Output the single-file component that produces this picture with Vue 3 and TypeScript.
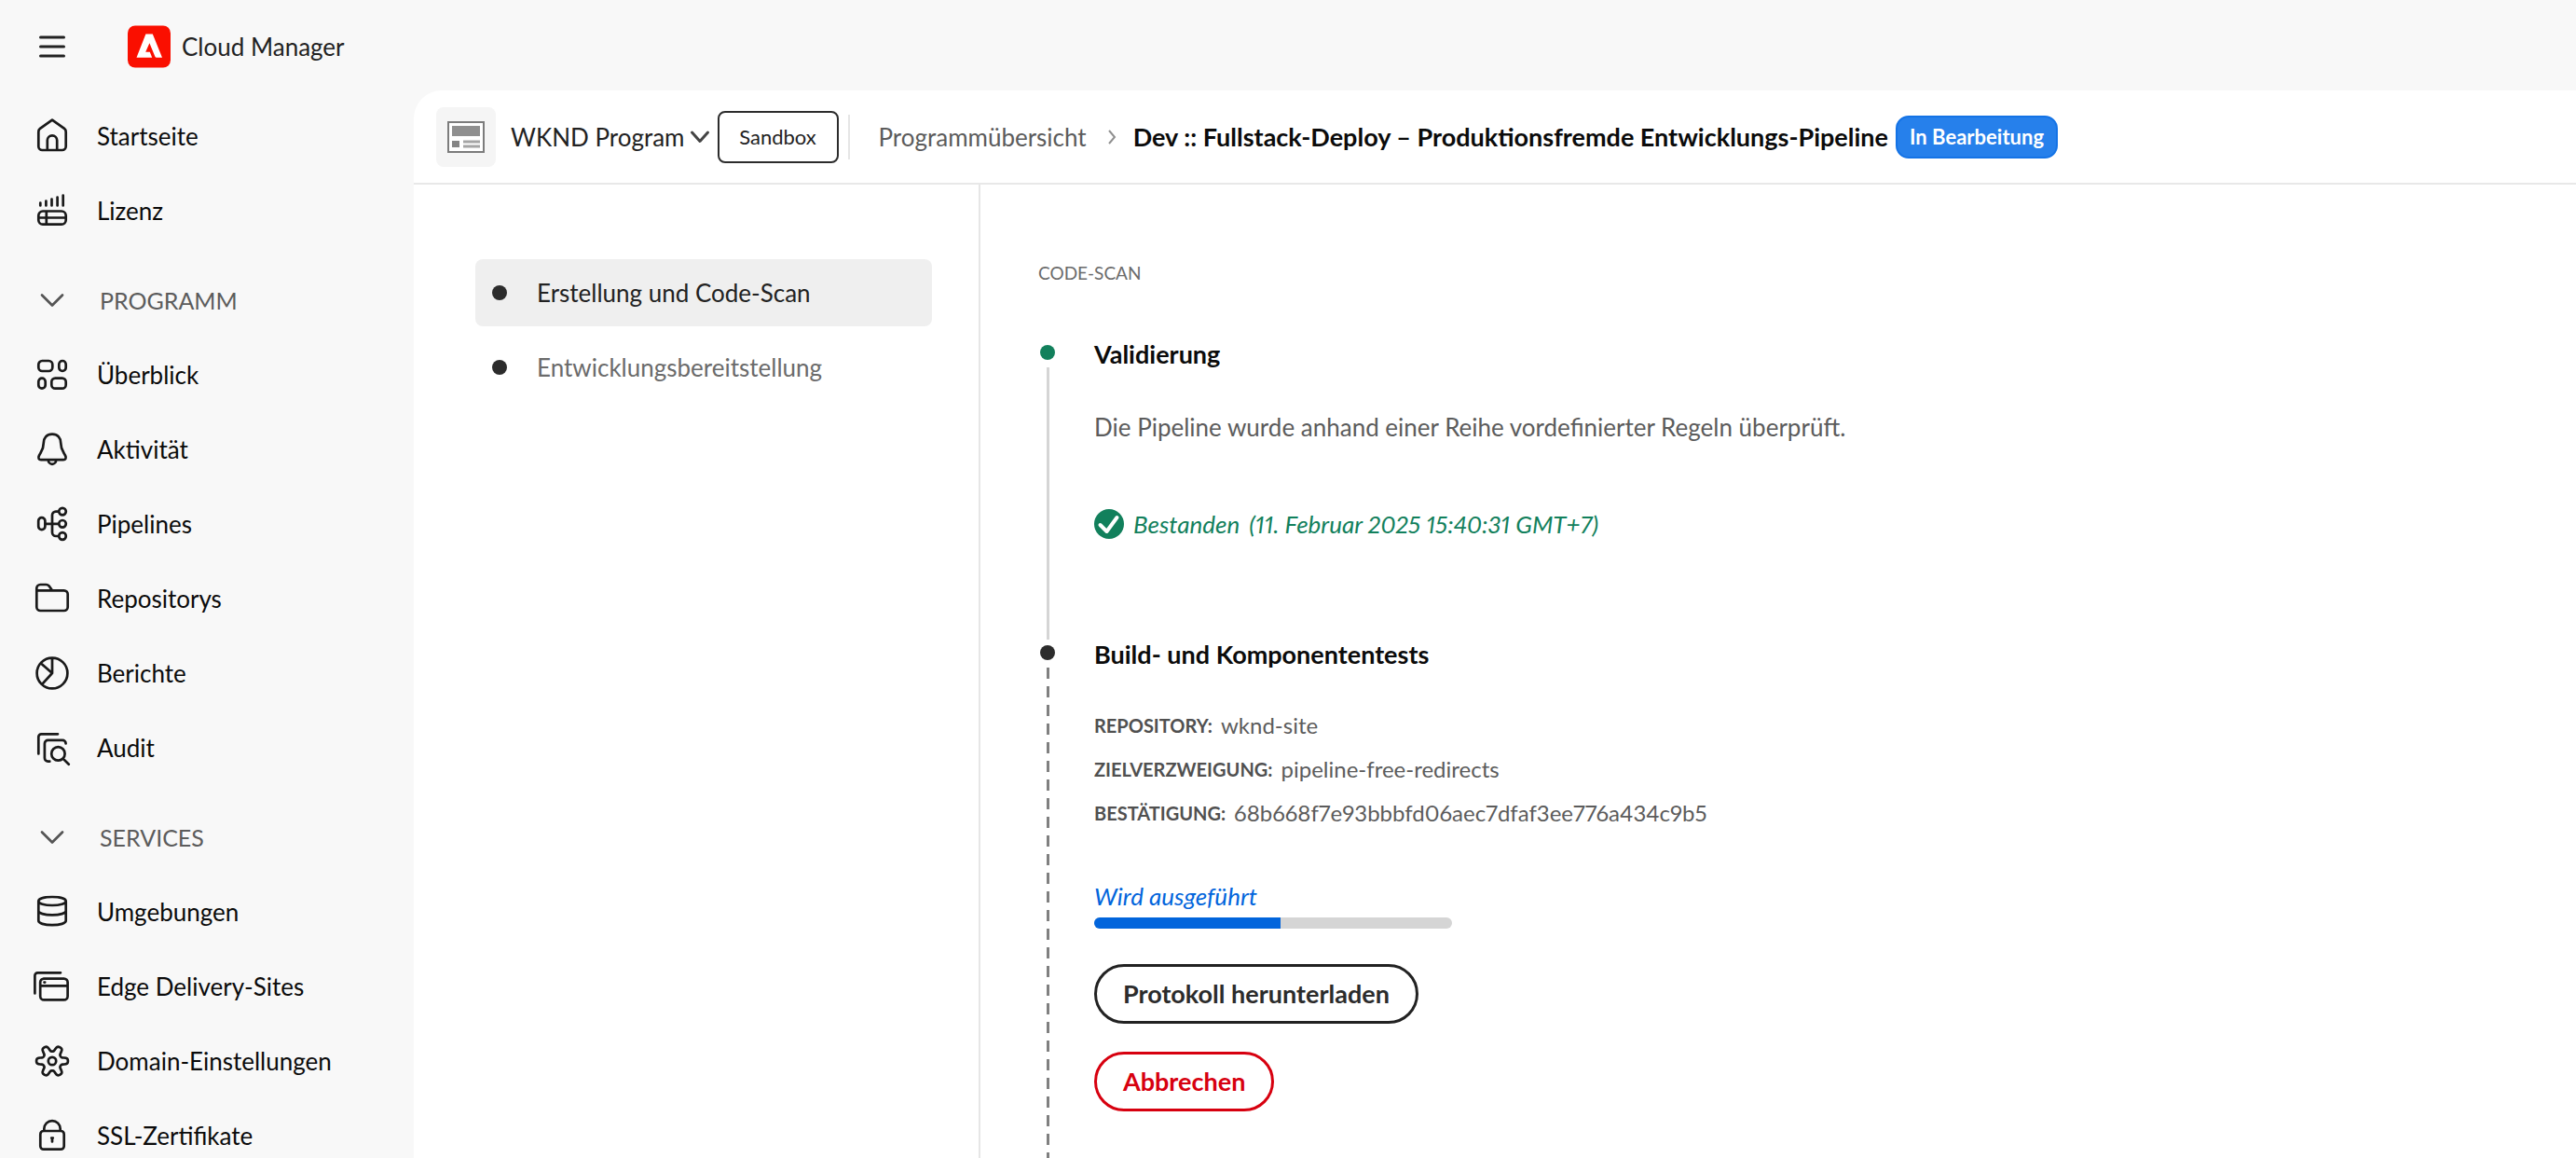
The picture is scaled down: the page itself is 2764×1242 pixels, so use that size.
<script setup lang="ts">
import { computed, ref } from 'vue'

type IconName =
  | 'home' | 'license' | 'overview' | 'bell' | 'pipelines' | 'folder' | 'reports'
  | 'audit' | 'database' | 'sites' | 'gear' | 'lock'

interface NavItem { label: string; icon: IconName }
interface NavSection { title: string; items: NavItem[] }

const topItems: NavItem[] = [
  { label: 'Startseite', icon: 'home' },
  { label: 'Lizenz', icon: 'license' },
]

const sections: NavSection[] = [
  {
    title: 'PROGRAMM',
    items: [
      { label: 'Überblick', icon: 'overview' },
      { label: 'Aktivität', icon: 'bell' },
      { label: 'Pipelines', icon: 'pipelines' },
      { label: 'Repositorys', icon: 'folder' },
      { label: 'Berichte', icon: 'reports' },
      { label: 'Audit', icon: 'audit' },
    ],
  },
  {
    title: 'SERVICES',
    items: [
      { label: 'Umgebungen', icon: 'database' },
      { label: 'Edge Delivery-Sites', icon: 'sites' },
      { label: 'Domain-Einstellungen', icon: 'gear' },
      { label: 'SSL-Zertifikate', icon: 'lock' },
    ],
  },
]

// Outline of the six-toothed gear, sampled in polar coordinates.
const gearPath = Array.from({ length: 120 }, (_, i) => {
  const a = (i / 120) * Math.PI * 2
  const r = 13.6 + (3.3 * Math.tanh(1.8 * Math.cos(6 * a))) / Math.tanh(1.8)
  return `${(20 + r * Math.cos(a)).toFixed(2)} ${(20 + r * Math.sin(a)).toFixed(2)}`
}).join(' L')

const icons: Record<IconName, string> = {
  home: 'M20 2.6 L33 11.8 Q34.7 13.2 34.7 15.4 V31 a4 4 0 0 1 -4 4 H9.3 a4 4 0 0 1 -4 -4 V15.4 Q5.3 13.2 7 11.8 Z M14.8 35 V24.6 a5 5 0 0 1 10.4 0 V35',
  license: 'M7.3 11.5 V14.5 M13.4 9.5 V14.5 M19.5 7.5 V14.5 M25.6 5.5 V14.5 M31.7 3.5 V14.5 M10 20.5 H30 a4.7 4.7 0 0 1 4.7 4.7 V30 a4.7 4.7 0 0 1 -4.7 4.7 H10 a4.7 4.7 0 0 1 -4.7 -4.7 V25.2 A4.7 4.7 0 0 1 10 20.5 Z M13.8 20.5 V34.7 M5.3 27.5 H34.7',
  overview: 'M9.3 5 H16.3 a4 4 0 0 1 4 4 V12 a4 4 0 0 1 -4 4 H9.3 a4 4 0 0 1 -4 -4 V9 a4 4 0 0 1 4 -4 Z M31 5 a3.7 3.7 0 0 1 3.7 3.7 V12.3 a3.7 3.7 0 0 1 -7.4 0 V8.7 A3.7 3.7 0 0 1 31 5 Z M9 23.6 a3.7 3.7 0 0 1 3.7 3.7 V31 a3.7 3.7 0 0 1 -7.4 0 V27.3 A3.7 3.7 0 0 1 9 23.6 Z M23.3 23.6 H30.7 a4 4 0 0 1 4 4 V30.7 a4 4 0 0 1 -4 4 H23.3 a4 4 0 0 1 -4 -4 V27.6 a4 4 0 0 1 4 -4 Z',
  bell: 'M20 3.6 C14 3.6 10.8 8 10.8 13 C10.8 20 8.5 22 6 26.5 C4.4 29.5 5.8 31.2 8 31.2 H32 C34.2 31.2 35.6 29.5 34 26.5 C31.5 22 29.2 20 29.2 13 C29.2 8 26 3.6 20 3.6 Z M15.8 31.2 a4.2 4.6 0 0 0 8.4 0',
  pipelines: 'M8.8 13.2 a3.6 3.6 0 0 1 3.6 3.6 V22.6 a3.6 3.6 0 0 1 -7.2 0 V16.8 A3.6 3.6 0 0 1 8.8 13.2 Z M12.4 19.8 H27.2 M27.2 6.6 H24 a4 4 0 0 0 -4 4 V29 a4 4 0 0 0 4 4 H27.2 M34.8 6.6 a3.8 3.8 0 1 1 -7.6 0 a3.8 3.8 0 1 1 7.6 0 Z M34.8 19.8 a3.8 3.8 0 1 1 -7.6 0 a3.8 3.8 0 1 1 7.6 0 Z M34.8 33 a3.8 3.8 0 1 1 -7.6 0 a3.8 3.8 0 1 1 7.6 0 Z',
  folder: 'M3.3 11.3 V9 a4 4 0 0 1 4 -4 H13.5 a4 4 0 0 1 3 1.3 L20 11.3 M3.3 11.3 H32.7 a4 4 0 0 1 4 4 V29 a4 4 0 0 1 -4 4 H7.3 a4 4 0 0 1 -4 -4 Z',
  reports: 'M36.4 20 a16.4 16.4 0 1 1 -32.8 0 a16.4 16.4 0 1 1 32.8 0 Z M20 3.6 V20 L8 9.5 M20 20 L9.4 31.6',
  audit: 'M5.3 26.5 V8.3 a3 3 0 0 1 3 -3 H26 M17.3 34.7 H15.5 a3.6 3.6 0 0 1 -3.6 -3.6 V15.5 a3.6 3.6 0 0 1 3.6 -3.6 H31 a3.6 3.6 0 0 1 3.6 3.6 M33.6 26.4 a7.2 7.2 0 1 1 -14.4 0 a7.2 7.2 0 1 1 14.4 0 Z M31.6 31.6 L37.8 37.8',
  database: 'M34.7 8.4 C34.7 11 28.5 13 20 13 S5.3 11 5.3 8.4 S11.5 4 20 4 S34.7 5.8 34.7 8.4 Z V29.6 C34.7 32.2 28.5 34.2 20 34.2 S5.3 32.2 5.3 29.6 V8.4 M5.3 19 C5.3 21.4 11.5 23.4 20 23.4 S34.7 21.4 34.7 19',
  sites: 'M1.4 27.5 V8.3 a3 3 0 0 1 3 -3 H29 M11 11.6 H32.6 a4 4 0 0 1 4 4 V30.4 a4 4 0 0 1 -4 4 H11.2 a4 4 0 0 1 -4 -4 V15.6 a4 4 0 0 1 4 -4 Z M7.2 19.4 H36.6 M11.5 15.6 H12.2',
  gear: `M${gearPath} Z M24.2 20 a4.2 4.2 0 1 1 -8.4 0 a4.2 4.2 0 1 1 8.4 0 Z`,
  lock: 'M10.8 15 H29.2 a3.5 3.5 0 0 1 3.5 3.5 V31.2 a3.5 3.5 0 0 1 -3.5 3.5 H10.8 a3.5 3.5 0 0 1 -3.5 -3.5 V18.5 a3.5 3.5 0 0 1 3.5 -3.5 Z M11.3 15 V12.8 a8.7 8.7 0 0 1 17.4 0 V15 M20 22.6 V26.4 M19.2 22.6 H20.8',
}

const stages = ['Erstellung und Code-Scan', 'Entwicklungsbereitstellung']
const activeStage = ref(0)

const details = [
  { label: 'REPOSITORY:', value: 'wknd-site' },
  { label: 'ZIELVERZWEIGUNG:', value: 'pipeline-free-redirects' },
  { label: 'BESTÄTIGUNG:', value: '68b668f7e93bbbfd06aec7dfaf3ee776a434c9b5' },
]

const progress = ref(52)
const progressStyle = computed(() => ({ width: `${progress.value}%` }))
</script>

<template>
  <div class="app">
    <header class="topbar">
      <button class="menu" type="button" aria-label="Menü">
        <svg width="40" height="40" viewBox="0 0 40 40"><path d="M7.5 10 H32.5 M7.5 20 H32.5 M7.5 30 H32.5" /></svg>
      </button>
      <a class="brand" href="#">
        <svg width="46" height="46" viewBox="0 0 46 46" aria-hidden="true">
          <rect width="46" height="45" y="0.5" rx="8" fill="#fa0f00" />
          <path fill="#fff" d="M19.4 9.5 H26.8 L37 34.8 H31 Q29.8 34.8 29.4 33.8 L23.4 19.2 L19.2 28.8 H23.8 L26.2 34.8 H9.5 Z" />
        </svg>
        <span>Cloud Manager</span>
      </a>
    </header>

    <div class="shell">
      <nav class="sidebar">
        <a v-for="item in topItems" :key="item.label" class="nav-item" href="#">
          <svg class="icon" viewBox="0 0 40 40" aria-hidden="true"><path :d="icons[item.icon]" /></svg>
          <span>{{ item.label }}</span>
        </a>
        <template v-for="section in sections" :key="section.title">
          <button class="nav-section" type="button">
            <svg class="icon" viewBox="0 0 40 40" aria-hidden="true"><path d="M9 14.5 L20 25.5 L31 14.5" /></svg>
            <span>{{ section.title }}</span>
          </button>
          <a v-for="item in section.items" :key="item.label" class="nav-item" href="#">
            <svg class="icon" viewBox="0 0 40 40" aria-hidden="true"><path :d="icons[item.icon]" /></svg>
            <span>{{ item.label }}</span>
          </a>
        </template>
      </nav>

      <main class="panel">
        <div class="crumbs">
          <span class="thumb">
            <svg width="40" height="34" viewBox="0 0 40 34" aria-hidden="true">
              <rect x="1" y="1" width="38" height="32" fill="#fff" stroke="#7c7c7c" stroke-width="2" />
              <rect x="5" y="5" width="30" height="11" fill="#8f8f8f" />
              <rect x="5" y="21" width="8" height="7" fill="#858585" />
              <path d="M17 22 H35 M17 27 H35" stroke="#a5a5a5" stroke-width="3" />
            </svg>
          </span>
          <button class="program" type="button">
            <span>WKND Program</span>
            <svg width="22" height="16" viewBox="0 0 22 16" aria-hidden="true"><path d="M2.5 3 L11 12.5 L19.5 3" /></svg>
          </button>
          <button class="sandbox" type="button">Sandbox</button>
          <span class="divider"></span>
          <a class="crumb" href="#">Programmübersicht</a>
          <svg class="separator" width="10" height="18" viewBox="0 0 10 18" aria-hidden="true"><path d="M2 2 L8 9 L2 16" /></svg>
          <h1 class="title">Dev :: Fullstack-Deploy – Produktionsfremde Entwicklungs-Pipeline</h1>
          <span class="badge">In Bearbeitung</span>
        </div>

        <div class="columns">
          <div class="stages">
            <button
              v-for="(stage, i) in stages"
              :key="stage"
              type="button"
              class="stage"
              :class="{ active: i === activeStage }"
              @click="activeStage = i"
            >
              <span class="dot"></span>
              <span>{{ stage }}</span>
            </button>
          </div>

          <section class="content">
            <h2 class="eyebrow">CODE-SCAN</h2>
            <ol class="steps">
              <li class="step">
                <div class="rail"><span class="dot done"></span><span class="line"></span></div>
                <div class="body validation">
                  <h3>Validierung</h3>
                  <p class="description">Die Pipeline wurde anhand einer Reihe vordefinierter Regeln überprüft.</p>
                  <p class="passed">
                    <svg width="32" height="32" viewBox="0 0 32 32" aria-hidden="true">
                      <circle cx="16" cy="16" r="16" fill="#12805c" />
                      <path d="M6.5 17 L13.5 24 L24.5 9" fill="none" stroke="#fff" stroke-width="4" stroke-linecap="round" stroke-linejoin="round" />
                    </svg>
                    <span>Bestanden</span>
                    <span>(11. Februar 2025 15:40:31 GMT+7)</span>
                  </p>
                </div>
              </li>
              <li class="step current">
                <div class="rail"><span class="dot"></span><span class="line dashed"></span></div>
                <div class="body">
                  <h3>Build- und Komponententests</h3>
                  <dl class="details">
                    <div v-for="row in details" :key="row.label">
                      <dt>{{ row.label }}</dt>
                      <dd>{{ row.value }}</dd>
                    </div>
                  </dl>
                  <p id="run-state" class="running">Wird ausgeführt</p>
                  <div class="progress" role="progressbar" aria-labelledby="run-state" :aria-valuenow="progress">
                    <div class="fill" :style="progressStyle"></div>
                  </div>
                  <div class="actions">
                    <button class="pill" type="button">Protokoll herunterladen</button>
                    <button class="pill danger" type="button">Abbrechen</button>
                  </div>
                </div>
              </li>
            </ol>
          </section>
        </div>
      </main>
    </div>
  </div>
</template>

<style>
body {
  margin: 0;
  background: #f8f8f8;
}
</style>

<style scoped>
.app {
  display: flex;
  flex-direction: column;
  height: 100vh;
  overflow: hidden;
  background: #f8f8f8;
  color: #0b0b0b;
  font-family: Lato, "Noto Sans", sans-serif;
  font-size: 26px;
  line-height: 32px;
  font-variant-numeric: proportional-nums;
}
.app *,
.app {
  box-sizing: border-box;
}
button {
  margin: 0;
  padding: 0;
  border: 0;
  background: none;
  color: inherit;
  font: inherit;
  cursor: pointer;
}
a {
  color: inherit;
  text-decoration: none;
}
h1, h2, h3, p, ol, dl, dd {
  margin: 0;
  padding: 0;
}
svg {
  display: block;
  flex: none;
}
.topbar {
  display: flex;
  flex: none;
  align-items: center;
  gap: 61px;
  height: 97px;
  padding: 2px 36px 0;
}
.menu path {
  fill: none;
  stroke: #222;
  stroke-width: 3;
  stroke-linecap: round;
}
.brand {
  display: flex;
  align-items: center;
  gap: 12px;
  color: #222;
}
.shell {
  display: flex;
  flex: 1;
  min-height: 0;
}
.sidebar {
  display: flex;
  flex: none;
  flex-direction: column;
  width: 444px;
  padding-top: 9px;
  overflow: hidden;
}
.nav-item,
.nav-section {
  display: flex;
  flex: none;
  align-items: center;
  gap: 28px;
  height: 80px;
  padding: 0 36px;
}
.nav-section {
  gap: 31px;
  margin-top: 16px;
  color: #5c5c5c;
  font-size: 25px;
}
.icon {
  width: 40px;
  height: 40px;
  overflow: visible;
}
.icon path {
  fill: none;
  stroke: #1a1a1a;
  stroke-width: 2.7;
  stroke-linecap: round;
  stroke-linejoin: round;
}
.nav-section .icon path {
  stroke: #555;
}
.panel {
  display: flex;
  flex: 1;
  flex-direction: column;
  min-width: 0;
  border-top-left-radius: 30px;
  background: #fff;
}
.crumbs {
  display: flex;
  flex: none;
  align-items: center;
  height: 101px;
  padding: 0 24px;
  border-bottom: 2px solid #e8e8e8;
  white-space: nowrap;
}
.thumb {
  display: grid;
  flex: none;
  place-items: center;
  width: 64px;
  height: 64px;
  border-radius: 8px;
  background: #f5f5f5;
}
.program {
  display: flex;
  align-items: center;
  gap: 5px;
  margin-left: 16px;
  color: #222;
}
.program path {
  fill: none;
  stroke: #444;
  stroke-width: 3;
  stroke-linecap: round;
  stroke-linejoin: round;
}
.sandbox {
  width: 130px;
  height: 56px;
  margin-left: 8px;
  border: 2px solid #2c2c2c;
  border-radius: 8px;
  color: #222;
  font-size: 22px;
}
.divider {
  width: 2px;
  height: 48px;
  margin: 0 31px 0 10px;
  background: #e6e6e6;
}
.crumb {
  color: #5c5c5c;
}
.separator {
  margin: 0 18px 0 22px;
}
.separator path {
  fill: none;
  stroke: #909090;
  stroke-width: 2;
}
.title {
  font-size: 27px;
  font-weight: 700;
}
.badge {
  height: 46px;
  margin-left: 8px;
  padding: 0 13px;
  border: 2px solid #1473e6;
  border-radius: 14px;
  background: #2680eb;
  color: #fff;
  font-size: 22px;
  font-weight: 700;
  line-height: 42px;
}
.columns {
  display: flex;
  flex: 1;
  min-height: 0;
}
.stages {
  display: flex;
  flex: none;
  flex-direction: column;
  gap: 8px;
  width: 608px;
  padding: 80px 50px 0 66px;
  border-right: 2px solid #e6e6e6;
}
.stage {
  display: flex;
  align-items: center;
  gap: 32px;
  height: 72px;
  padding: 0 18px;
  border-radius: 8px;
  color: #6b6b6b;
  text-align: left;
}
.stage.active {
  background: #efefef;
  color: #222;
}
.dot {
  flex: none;
  width: 16px;
  height: 16px;
  border-radius: 50%;
  background: #2c2c2c;
}
.dot.done {
  background: #12805c;
}
.content {
  display: flex;
  flex: 1;
  flex-direction: column;
  padding: 79px 62px 0;
}
.eyebrow {
  color: #6b6b6b;
  font-size: 19px;
  font-weight: 400;
}
.steps {
  display: flex;
  flex: 1;
  flex-direction: column;
  margin-top: 55px;
  list-style: none;
}
.step {
  display: flex;
  gap: 40px;
}
.step.current {
  flex: 1;
}
.rail {
  display: flex;
  flex: none;
  flex-direction: column;
  align-items: center;
  gap: 8px;
  width: 20px;
  padding-top: 6px;
}
.line {
  flex: 1;
  width: 3px;
  background: #d5d5d5;
}
.line.dashed {
  background: repeating-linear-gradient(#808080 0 12px, transparent 12px 20px);
}
h3 {
  font-size: 27px;
  font-weight: 700;
}
.validation {
  padding-bottom: 108px;
}
.description {
  margin-top: 46px;
  color: #5c5c5c;
}
.passed {
  display: flex;
  align-items: center;
  gap: 10px;
  margin-top: 72px;
  color: #12805c;
  font-style: italic;
}
.details {
  margin-top: 36px;
}
.details div {
  display: flex;
  align-items: center;
  gap: 9px;
  height: 47px;
  color: #5c5c5c;
}
.details dt {
  color: #505050;
  font-size: 20px;
  font-weight: 700;
}
.details dd {
  font-size: 24px;
}
.running {
  margin-top: 50px;
  color: #0265dc;
  font-style: italic;
}
.progress {
  width: 384px;
  height: 12px;
  margin-top: 7px;
  overflow: hidden;
  border-radius: 6px;
  background: #d5d5d5;
}
.fill {
  height: 100%;
  background: #0265dc;
}
.actions {
  display: flex;
  flex-direction: column;
  align-items: flex-start;
  gap: 30px;
  margin-top: 38px;
}
.pill {
  height: 64px;
  padding: 0 28px;
  border: 3px solid #222;
  border-radius: 32px;
  color: #2c2c2c;
  font-size: 27px;
  font-weight: 700;
}
.pill.danger {
  border-color: #d7000f;
  color: #d7000f;
}
</style>
